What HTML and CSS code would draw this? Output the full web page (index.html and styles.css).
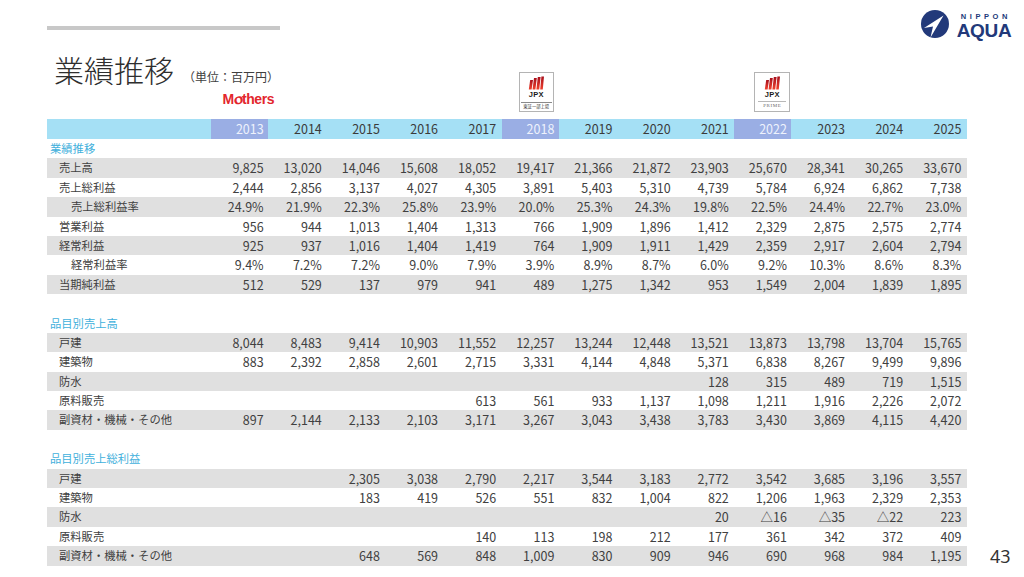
FILE: index.html
```html
<!DOCTYPE html>
<html lang="ja">
<head>
<meta charset="utf-8">
<title>業績推移</title>
<link rel="stylesheet" href="styles.css">
</head>
<body>
<div class="slide">
  <header class="top">
    <div class="titlebox">
      <div class="bar"></div>
      <div class="titleline">
        <h1>業績推移</h1>
        <span class="unit">（単位：百万円）</span>
      </div>
    </div>
    <div class="mothers">M<span class="o">o</span>thers</div>
    <div class="jpx tse">
      <svg class="bars" viewBox="0 0 16 14" width="16" height="14">
        <defs><linearGradient id="rg1" x1="0" y1="0" x2="0" y2="1"><stop offset="0" stop-color="#a8101c"/><stop offset="1" stop-color="#f0412e"/></linearGradient></defs>
        <polygon points="2.2,4 5,4 3.6,13.5 0.8,13.5" fill="url(#rg1)"/>
        <polygon points="6,2 8.8,2 7.4,13.5 4.6,13.5" fill="url(#rg1)"/>
        <polygon points="9.8,1 12.6,1 11.2,13.5 8.4,13.5" fill="url(#rg1)"/>
        <polygon points="13.4,0.5 16,0.5 14.8,13.5 12.2,13.5" fill="url(#rg1)"/>
      </svg>
      <span class="jpxt">JPX</span>
      <span class="tiny">東証一部上場</span>
    </div>
    <div class="jpx prime">
      <svg class="bars" viewBox="0 0 16 14" width="16" height="14">
        <defs><linearGradient id="rg2" x1="0" y1="0" x2="0" y2="1"><stop offset="0" stop-color="#a8101c"/><stop offset="1" stop-color="#f0412e"/></linearGradient></defs>
        <polygon points="2.2,4 5,4 3.6,13.5 0.8,13.5" fill="url(#rg2)"/>
        <polygon points="6,2 8.8,2 7.4,13.5 4.6,13.5" fill="url(#rg2)"/>
        <polygon points="9.8,1 12.6,1 11.2,13.5 8.4,13.5" fill="url(#rg2)"/>
        <polygon points="13.4,0.5 16,0.5 14.8,13.5 12.2,13.5" fill="url(#rg2)"/>
      </svg>
      <span class="jpxt">JPX</span>
      <span class="primet">PRIME</span>
    </div>
    <div class="logo">
      <svg class="mark" viewBox="0 0 28 28" width="28" height="28">
        <circle cx="14" cy="14" r="14" fill="#22397a"/>
        <polygon points="22.5,5.5 3,18 12,16.5 9.5,27.5" fill="#fff"/>
      </svg>
      <div class="wordmark">
        <span class="nippon">NIPPON</span>
        <span class="aqua">AQUA</span>
      </div>
    </div>
  </header>

  <main class="main">
    <div class="table">
      <div class="row hdr">
        <span class="lb"></span>
        <span class="hl">2013</span><span>2014</span><span>2015</span><span>2016</span><span>2017</span>
        <span class="hl">2018</span><span>2019</span><span>2020</span><span>2021</span>
        <span class="hl">2022</span><span>2023</span><span>2024</span><span>2025</span>
      </div>

      <div class="row sec"><span class="lb">業績推移</span></div>
      <div class="row g"><span class="lb">売上高</span><span>9,825</span><span>13,020</span><span>14,046</span><span>15,608</span><span>18,052</span><span>19,417</span><span>21,366</span><span>21,872</span><span>23,903</span><span>25,670</span><span>28,341</span><span>30,265</span><span>33,670</span></div>
      <div class="row"><span class="lb">売上総利益</span><span>2,444</span><span>2,856</span><span>3,137</span><span>4,027</span><span>4,305</span><span>3,891</span><span>5,403</span><span>5,310</span><span>4,739</span><span>5,784</span><span>6,924</span><span>6,862</span><span>7,738</span></div>
      <div class="row g"><span class="lb sub">売上総利益率</span><span>24.9%</span><span>21.9%</span><span>22.3%</span><span>25.8%</span><span>23.9%</span><span>20.0%</span><span>25.3%</span><span>24.3%</span><span>19.8%</span><span>22.5%</span><span>24.4%</span><span>22.7%</span><span>23.0%</span></div>
      <div class="row"><span class="lb">営業利益</span><span>956</span><span>944</span><span>1,013</span><span>1,404</span><span>1,313</span><span>766</span><span>1,909</span><span>1,896</span><span>1,412</span><span>2,329</span><span>2,875</span><span>2,575</span><span>2,774</span></div>
      <div class="row g"><span class="lb">経常利益</span><span>925</span><span>937</span><span>1,016</span><span>1,404</span><span>1,419</span><span>764</span><span>1,909</span><span>1,911</span><span>1,429</span><span>2,359</span><span>2,917</span><span>2,604</span><span>2,794</span></div>
      <div class="row"><span class="lb sub">経常利益率</span><span>9.4%</span><span>7.2%</span><span>7.2%</span><span>9.0%</span><span>7.9%</span><span>3.9%</span><span>8.9%</span><span>8.7%</span><span>6.0%</span><span>9.2%</span><span>10.3%</span><span>8.6%</span><span>8.3%</span></div>
      <div class="row g"><span class="lb">当期純利益</span><span>512</span><span>529</span><span>137</span><span>979</span><span>941</span><span>489</span><span>1,275</span><span>1,342</span><span>953</span><span>1,549</span><span>2,004</span><span>1,839</span><span>1,895</span></div>

      <div class="row blank"></div>
      <div class="row sec"><span class="lb">品目別売上高</span></div>
      <div class="row g"><span class="lb">戸建</span><span>8,044</span><span>8,483</span><span>9,414</span><span>10,903</span><span>11,552</span><span>12,257</span><span>13,244</span><span>12,448</span><span>13,521</span><span>13,873</span><span>13,798</span><span>13,704</span><span>15,765</span></div>
      <div class="row"><span class="lb">建築物</span><span>883</span><span>2,392</span><span>2,858</span><span>2,601</span><span>2,715</span><span>3,331</span><span>4,144</span><span>4,848</span><span>5,371</span><span>6,838</span><span>8,267</span><span>9,499</span><span>9,896</span></div>
      <div class="row g"><span class="lb">防水</span><span></span><span></span><span></span><span></span><span></span><span></span><span></span><span></span><span>128</span><span>315</span><span>489</span><span>719</span><span>1,515</span></div>
      <div class="row"><span class="lb">原料販売</span><span></span><span></span><span></span><span></span><span>613</span><span>561</span><span>933</span><span>1,137</span><span>1,098</span><span>1,211</span><span>1,916</span><span>2,226</span><span>2,072</span></div>
      <div class="row g"><span class="lb">副資材・機械・その他</span><span>897</span><span>2,144</span><span>2,133</span><span>2,103</span><span>3,171</span><span>3,267</span><span>3,043</span><span>3,438</span><span>3,783</span><span>3,430</span><span>3,869</span><span>4,115</span><span>4,420</span></div>

      <div class="row blank"></div>
      <div class="row sec"><span class="lb">品目別売上総利益</span></div>
      <div class="row g"><span class="lb">戸建</span><span></span><span></span><span>2,305</span><span>3,038</span><span>2,790</span><span>2,217</span><span>3,544</span><span>3,183</span><span>2,772</span><span>3,542</span><span>3,685</span><span>3,196</span><span>3,557</span></div>
      <div class="row"><span class="lb">建築物</span><span></span><span></span><span>183</span><span>419</span><span>526</span><span>551</span><span>832</span><span>1,004</span><span>822</span><span>1,206</span><span>1,963</span><span>2,329</span><span>2,353</span></div>
      <div class="row g"><span class="lb">防水</span><span></span><span></span><span></span><span></span><span></span><span></span><span></span><span></span><span>20</span><span>△16</span><span>△35</span><span>△22</span><span>223</span></div>
      <div class="row"><span class="lb">原料販売</span><span></span><span></span><span></span><span></span><span>140</span><span>113</span><span>198</span><span>212</span><span>177</span><span>361</span><span>342</span><span>372</span><span>409</span></div>
      <div class="row g"><span class="lb">副資材・機械・その他</span><span></span><span></span><span>648</span><span>569</span><span>848</span><span>1,009</span><span>830</span><span>909</span><span>946</span><span>690</span><span>968</span><span>984</span><span>1,195</span></div>
    </div>
    <div class="pagenum">43</div>
  </main>
</div>
</body>
</html>
```

FILE: styles.css
```css
* { box-sizing: border-box; }
html, body { margin: 0; padding: 0; background: #fff; }
body {
  font-family: "Noto Sans CJK JP", "Noto Sans", sans-serif;
  color: #404040;
}
.slide {
  width: 1024px;
  height: 577px;
  overflow: hidden;
}

/* ---------- top area ---------- */
.top {
  display: grid;
  grid-template-columns: 164px repeat(13, 58.15px) 57px;
  grid-template-rows: 119px;
  margin-left: 47px;
}
.titlebox {
  grid-column: 1 / 7;
  grid-row: 1;
  padding-top: 26px;
}
.bar {
  width: 233px;
  height: 4px;
  background: #c8c8c8;
}
.titleline {
  display: flex;
  align-items: baseline;
  gap: 9px;
  margin-top: 23.5px;
  padding-left: 7px;
}
.titleline h1 {
  margin: 0;
  font-size: 30px;
  line-height: 30px;
  font-weight: 300;
  color: #2e2e2e;
  letter-spacing: 0;
}
.unit {
  font-size: 12px;
  color: #404040;
}
.mothers {
  grid-column: 2;
  grid-row: 1;
  align-self: end;
  justify-self: end;
  margin-right: -5px;
  margin-bottom: 12px;
  font-family: "Liberation Sans", sans-serif;
  font-weight: 700;
  font-size: 14px;
  line-height: 15px;
  letter-spacing: -0.4px;
  color: #e3262d;
}
.mothers .o {
  display: inline-block;
  font-style: italic;
  transform: scaleX(1.15) rotate(-15deg);
}
.jpx {
  grid-row: 1;
  align-self: end;
  justify-self: start;
  width: 35px;
  height: 40px;
  margin-bottom: 6.7px;
  border: 1px solid #b4b4b4;
  background: #fff;
  display: flex;
  flex-direction: column;
  align-items: center;
}
.jpx.tse { grid-column: 7; margin-left: 17px; }
.jpx.prime { grid-column: 11; margin-left: 20px; width: 36px; }
.bars { display: block; margin-top: 3px; }
.jpxt {
  font-family: "Liberation Sans", sans-serif;
  font-weight: 700;
  font-size: 7.5px;
  line-height: 8px;
  margin-top: 1px;
  color: #1a1a1a;
  letter-spacing: 0.3px;
}
.tiny {
  margin-top: 3px;
  width: 31px;
  border-top: 1px solid #8a8a8a;
  font-size: 4.3px;
  line-height: 7px;
  text-align: center;
  color: #333;
}
.primet {
  margin-top: 2px;
  width: 28px;
  border-top: 1px solid #b8b8b8;
  font-family: "Liberation Serif", serif;
  font-size: 5px;
  line-height: 8px;
  letter-spacing: 0.6px;
  text-align: center;
  color: #6a6a6a;
}
.logo {
  grid-column: 14 / 16;
  grid-row: 1;
  align-self: start;
  justify-self: start;
  margin-top: 10px;
  margin-left: 12px;
  display: flex;
  align-items: flex-start;
  gap: 8px;
}
.mark { display: block; }
.wordmark {
  display: flex;
  flex-direction: column;
  align-items: flex-start;
  margin-top: 3px;
  color: #22397a;
  font-family: "Liberation Sans", sans-serif;
  font-weight: 700;
}
.nippon {
  font-size: 7.5px;
  line-height: 8px;
  letter-spacing: 3.6px;
  margin-left: 4px;
}
.aqua {
  margin-top: 2px;
  font-size: 19px;
  line-height: 16px;
  letter-spacing: -0.3px;
}

/* ---------- table ---------- */
.main {
  display: flex;
  align-items: flex-end;
  margin-left: 47px;
}
.table { width: 920px; }
.row {
  display: grid;
  grid-template-columns: 164px repeat(13, 58.15px);
  height: 19.4px;
  line-height: 19.4px;
  font-size: 12.5px;
  white-space: nowrap;
}
.row span {
  text-align: right;
  padding-right: 5.5px;
}
.row .lb {
  text-align: left;
  padding-left: 12px;
  font-size: 11.3px;
}
.row .lb.sub { padding-left: 24px; }
.row.g { background: #e0e0e0; }
.row.sec .lb {
  padding-left: 3px;
  color: #3fb0dc;
}
.row.hdr {
  height: 20px;
  line-height: 20px;
  background: #a5e0f5;
  color: #3a3a3a;
}
.row.hdr .hl {
  background: #9aaee4;
  color: #eef2fc;
  margin-right: 1px;
  padding-right: 4.5px;
}
.pagenum {
  margin-left: 23px;
  margin-bottom: 1px;
  font-family: "Noto Sans", sans-serif;
  font-size: 18px;
  line-height: 18px;
  color: #333;
}
```
